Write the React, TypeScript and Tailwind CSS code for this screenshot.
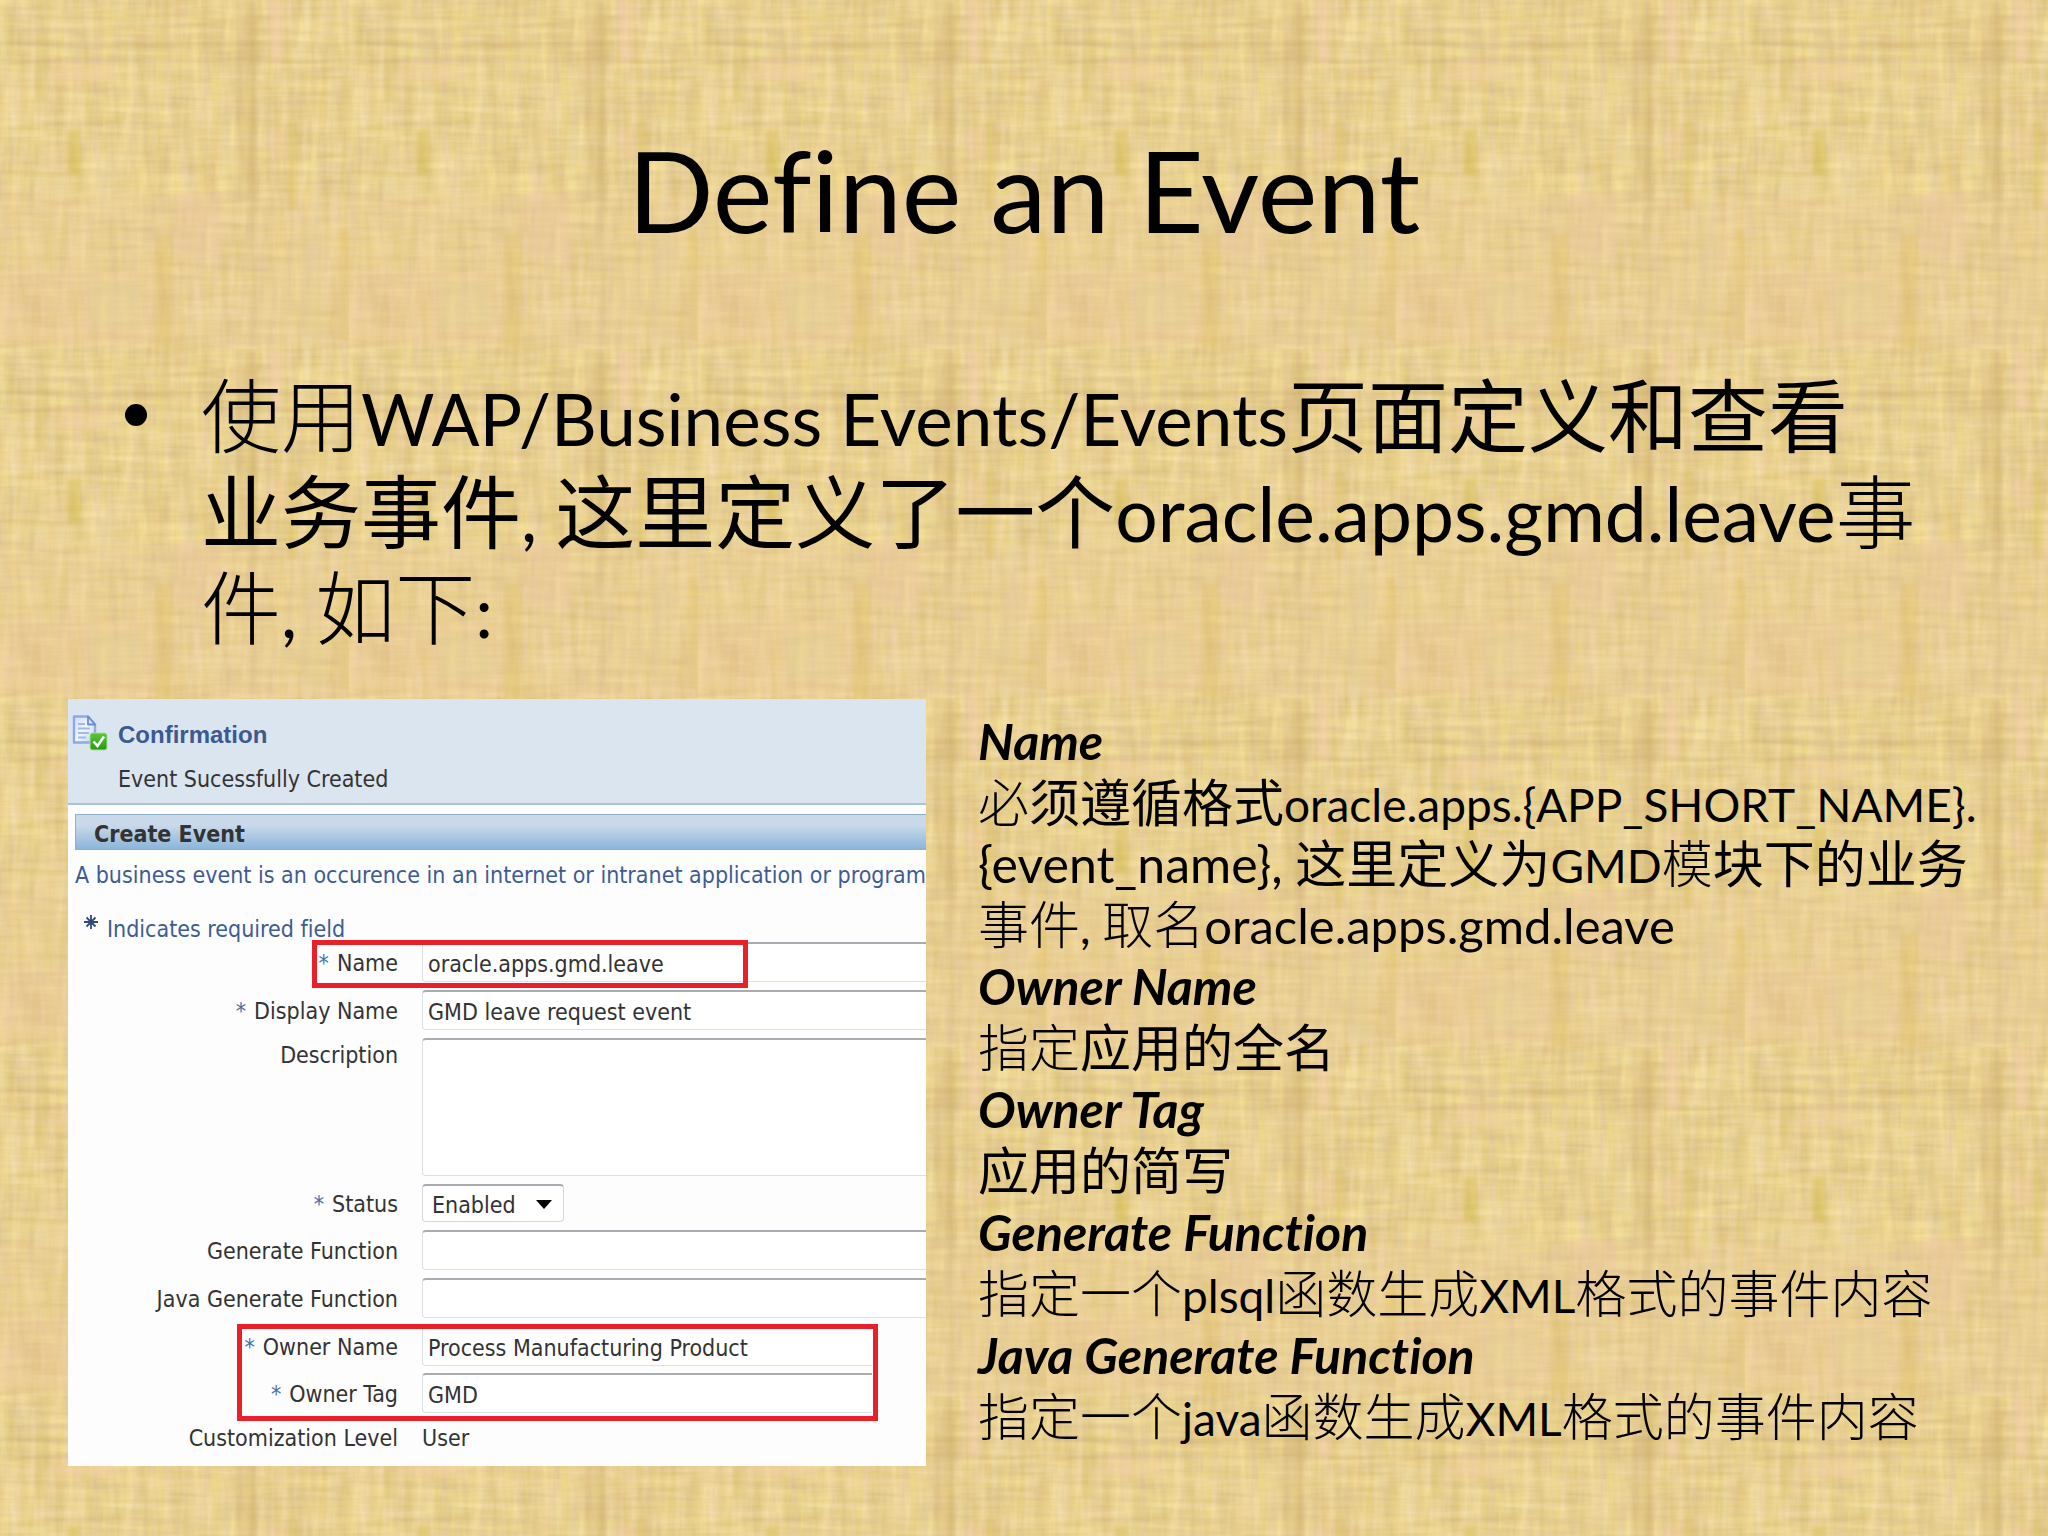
import type { ReactNode } from "react";

type NoteLine = { heading?: boolean; content: ReactNode };

// Light strokes for the Song-style glyphs, regular for the YaHei-style ones.
function Thin({ children }: { children: ReactNode }) {
  return <span className="font-light">{children}</span>;
}

function Big({ children }: { children: ReactNode }) {
  return <span className="text-[80px]">{children}</span>;
}

function Cjk({ children }: { children: ReactNode }) {
  return <span className="text-[51px]">{children}</span>;
}

const notes: NoteLine[] = [
  { heading: true, content: "Name" },
  {
    content: (
      <>
        <Cjk>
          <Thin>必</Thin>须遵循格式
        </Cjk>
        oracle.apps.{"{APP_SHORT_NAME}."}
      </>
    ),
  },
  {
    content: (
      <>
        <span className="text-[50px]">{"{event_name}, "}</span>
        <Cjk>这里定义为</Cjk>GMD
        <Cjk>
          <Thin>模</Thin>块下的业务
        </Cjk>
      </>
    ),
  },
  {
    content: (
      <>
        <Cjk>
          <Thin>事件</Thin>
        </Cjk>
        ,{" "}
        <Cjk>
          <Thin>取名</Thin>
        </Cjk>
        <span className="text-[49px]">oracle.apps.gmd.leave</span>
      </>
    ),
  },
  { heading: true, content: "Owner Name" },
  {
    content: (
      <Cjk>
        <Thin>指定</Thin>应用的全名
      </Cjk>
    ),
  },
  { heading: true, content: "Owner Tag" },
  { content: <Cjk>应用的简写</Cjk> },
  { heading: true, content: "Generate Function" },
  {
    content: (
      <>
        <Cjk>
          <Thin>指定一个</Thin>
        </Cjk>
        plsql
        <Cjk>
          <Thin>函数生成</Thin>
        </Cjk>
        XML
        <Cjk>
          <Thin>格式的事件内容</Thin>
        </Cjk>
      </>
    ),
  },
  { heading: true, content: "Java Generate Function" },
  {
    content: (
      <>
        <Cjk>
          <Thin>指定一个</Thin>
        </Cjk>
        java
        <Cjk>
          <Thin>函数生成</Thin>
        </Cjk>
        XML
        <Cjk>
          <Thin>格式的事件内容</Thin>
        </Cjk>
      </>
    ),
  },
];

// x, y, width, height, colour, opacity of the dyed fibres in one papyrus tile
const fibres: [number, number, number, number, string, number][] = [
  [0, 195, 349, 154, "#ecc79a", 0.25],
  [35, 0, 13, 100, "#cfb45e", 0.25],
  [67, 130, 12, 44, "#cdb83e", 0.35],
  [155, 235, 17, 114, "#d9bd55", 0.3],
  [155, 0, 17, 60, "#d9bd6a", 0.25],
  [235, 0, 22, 200, "#c9a566", 0.22],
  [250, 0, 6, 349, "#c0a060", 0.2],
  [270, 0, 12, 62, "#f3c9ac", 0.5],
  [272, 130, 14, 30, "#f0c5a0", 0.4],
  [288, 120, 9, 90, "#cfb648", 0.3],
  [340, 230, 9, 110, "#d8bb50", 0.3],
  [175, 190, 45, 70, "#f1c8a6", 0.28],
  [52, 60, 60, 22, "#f3cda6", 0.28],
  [0, 270, 150, 70, "#efc9a0", 0.15],
  [90, 280, 50, 50, "#dcd095", 0.25],
  [300, 215, 22, 130, "#e0cf98", 0.3],
  [127, 55, 3, 120, "#f8e6a4", 0.5],
  [145, 80, 2, 90, "#a98a4c", 0.3],
  [80, 196, 3, 65, "#f8e6a4", 0.4],
  [312, 150, 3, 75, "#f8e8b0", 0.5],
  [0, 43, 349, 2, "#a9854a", 0.3],
  [0, 59, 349, 2, "#b08d50", 0.25],
  [0, 22, 150, 3, "#f9e4a8", 0.4],
  [120, 83, 180, 3, "#f9e4a8", 0.4],
  [0, 178, 200, 3, "#f9e4a8", 0.4],
  [40, 193, 110, 2, "#fbeab4", 0.4],
  [180, 310, 60, 4, "#fae4ae", 0.4],
  [120, 228, 60, 2, "#b08c50", 0.25],
  [230, 345, 119, 2, "#f9e6ac", 0.4],
];

function Papyrus() {
  return (
    <svg className="absolute inset-0 h-full w-full" aria-hidden="true">
      <defs>
        <filter id="weft" x="0" y="0" width="100%" height="100%" colorInterpolationFilters="sRGB">
          <feTurbulence type="fractalNoise" baseFrequency="0.015 0.14" numOctaves="3" seed="4" stitchTiles="stitch" />
          <feColorMatrix values="0.18 0 0 0 0.82  0.22 0 0 0 0.705  0.2 0.16 0 0 0.39  0 0 0 0 1" />
        </filter>
        <filter id="warp" x="0" y="0" width="100%" height="100%" colorInterpolationFilters="sRGB">
          <feTurbulence type="fractalNoise" baseFrequency="0.11 0.014" numOctaves="3" seed="11" stitchTiles="stitch" />
          <feColorMatrix values="0.2 0 0 0 0.81  0.22 0.06 0 0 0.675  0.2 0 0.3 0 0.32  0 0 0 0 0.5" />
        </filter>
        <filter id="soft">
          <feGaussianBlur stdDeviation="2" />
        </filter>
        <pattern id="papyrus" width="349" height="349" patternUnits="userSpaceOnUse">
          <rect width="349" height="349" fill="#e9d092" />
          <rect width="349" height="349" filter="url(#weft)" />
          <rect width="349" height="349" filter="url(#warp)" />
          <g filter="url(#soft)">
            {fibres.map(([x, y, w, h, fill, opacity], i) => (
              <rect key={i} x={x} y={y} width={w} height={h} fill={fill} opacity={opacity} />
            ))}
          </g>
        </pattern>
      </defs>
      <rect width="100%" height="100%" fill="url(#papyrus)" />
    </svg>
  );
}

function ConfirmationIcon() {
  return (
    <svg className="h-9 w-9 shrink-0" viewBox="0 0 36 36" aria-hidden="true">
      <defs>
        <linearGradient id="page" x1="0" y1="0" x2="1" y2="1">
          <stop offset="0" stopColor="#c9dbfa" />
          <stop offset="0.5" stopColor="#f2f7ff" />
          <stop offset="1" stopColor="#bcd0f6" />
        </linearGradient>
        <linearGradient id="tick" x1="0" y1="0" x2="0" y2="1">
          <stop offset="0" stopColor="#5cc63a" />
          <stop offset="1" stopColor="#259a10" />
        </linearGradient>
      </defs>
      <path d="M2 1.500h14l7 8v18H2z" fill="url(#page)" stroke="#8ea9e4" strokeWidth="2.4" strokeLinejoin="round" />
      <path d="M16 1.500v8h7z" fill="#dfe9ff" stroke="#6d8ad6" strokeWidth="1.8" strokeLinejoin="round" />
      <path d="M6 9h7M6 13.500h12M6 18h11M6 22.500h8" stroke="#a3b9ea" strokeWidth="1.8" />
      <rect x="18" y="18" width="17" height="17" rx="2.5" fill="url(#tick)" stroke="#a9df96" />
      <path d="M21.500 26.500l4 4.500 6.500-9.500" fill="none" stroke="#fff" strokeWidth="2.6" />
    </svg>
  );
}

function RequiredIcon() {
  return (
    <svg className="h-4 w-4 shrink-0" viewBox="0 0 16 16" aria-hidden="true">
      <path d="M8 1v14M1 8h14M3.500 3.500l9 9M12.500 3.500l-9 9" stroke="#2f4a7c" strokeWidth="1.8" />
    </svg>
  );
}

type RowProps = { id?: string; label: string; required?: boolean; top?: boolean; children: ReactNode };

function Row({ id, label, required, top, children }: RowProps) {
  return (
    <div className={top ? "flex items-start gap-6" : "flex items-center gap-6"}>
      <label htmlFor={id} className="w-[330px] shrink-0 pt-[2px] text-right">
        {required && <span className="mr-2 text-[#4a6ea5]">*</span>}
        {label}
      </label>
      {children}
    </div>
  );
}

const fieldClass =
  "h-10 min-w-0 flex-1 rounded-l-sm border border-r-0 border-t-2 border-[#dcdfe6] border-t-[#a9abb0] bg-white px-[5px] pt-[2px] outline-none";

function EventForm() {
  return (
    <section className="min-w-0 flex-[858] overflow-hidden bg-[#fdfdfe] pb-[13px] font-['DejaVu_Sans_Condensed','DejaVu_Sans',sans-serif] text-[23px] leading-[30px] text-[#333]">
      <header className="flex h-[106px] gap-[10px] border-b-2 border-[#a9c3de] bg-[#dbe5ef] pt-4 pl-1">
        <ConfirmationIcon />
        <div>
          <h2 className="mt-[5px] font-['Liberation_Sans',Arial,sans-serif] text-[24px] font-bold text-[#3c5a8f]">
            Confirmation
          </h2>
          <p className="mt-[14px]">Event Sucessfully Created</p>
        </div>
      </header>

      <h3 className="mt-[9px] ml-[7px] h-9 border border-r-0 border-[#8fb0cf] bg-gradient-to-b from-[#c9d9e9] from-30% to-[#8cb5db] pl-[18px] leading-[38px] font-bold">
        Create Event
      </h3>
      <p className="mt-[10px] ml-[7px] whitespace-nowrap text-[#3d5c92]">
        A business event is an occurence in an internet or intranet application or program
      </p>
      <p className="mt-6 ml-[15px] flex gap-2 text-[#3d5c92]">
        <RequiredIcon />
        Indicates required field
      </p>

      <form className="-mt-[2px] flex flex-col gap-2" onSubmit={(e) => e.preventDefault()}>
        <div className="relative">
          <Row id="name" label="Name" required>
            <input id="name" className={fieldClass} defaultValue="oracle.apps.gmd.leave" />
          </Row>
          <div className="pointer-events-none absolute -top-[2px] left-[244px] h-12 w-[436px] border-[5px] border-[#e8202a]" />
        </div>
        <Row id="displayName" label="Display Name" required>
          <input id="displayName" className={fieldClass} defaultValue="GMD leave request event" />
        </Row>
        <Row id="description" label="Description" top>
          <textarea
            id="description"
            className="h-[138px] min-w-0 flex-1 resize-none rounded-l-sm border border-t-2 border-r-0 border-[#dcdfe6] border-t-[#a9abb0] bg-white outline-none"
          />
        </Row>
        <Row id="status" label="Status" required>
          <div className="relative">
            <select
              id="status"
              className="block h-[38px] w-[142px] appearance-none rounded-sm border border-t-2 border-[#d3d7de] border-t-[#a9abb0] bg-white pt-[2px] pl-[9px]"
            >
              <option>Enabled</option>
            </select>
            <svg className="pointer-events-none absolute top-4 right-3 h-[9px] w-4" viewBox="0 0 16 9" aria-hidden="true">
              <path d="M0 0h16L8 9z" fill="#000" />
            </svg>
          </div>
        </Row>
        <Row id="generateFunction" label="Generate Function">
          <input id="generateFunction" className={fieldClass} />
        </Row>
        <Row id="javaGenerateFunction" label="Java Generate Function">
          <input id="javaGenerateFunction" className={fieldClass} />
        </Row>
        <div className="relative flex flex-col gap-[7px] pr-[54px]">
          <Row id="ownerName" label="Owner Name" required>
            <input id="ownerName" className={fieldClass} defaultValue="Process Manufacturing Product" />
          </Row>
          <Row id="ownerTag" label="Owner Tag" required>
            <input id="ownerTag" className={fieldClass} defaultValue="GMD" />
          </Row>
          <div className="pointer-events-none absolute -top-[2px] left-[169px] h-[97px] w-[641px] border-[5px] border-[#e8202a]" />
        </div>
        <Row id="customizationLevel" label="Customization Level">
          <output id="customizationLevel" className="pt-[2px]">User</output>
        </Row>
      </form>
    </section>
  );
}

export default function App() {
  return (
    <main className="relative min-h-screen overflow-hidden bg-[#e9d092] font-['Lato','Noto_Sans_CJK_SC',sans-serif] text-black [font-variant-ligatures:none]">
      <Papyrus />
      <div className="relative">
        <h1 className="pt-[119px] text-center text-[113px] leading-[140px]">Define an Event</h1>

        <ul className="mt-[108px] pl-[125px]">
          <li className="flex gap-[54px] text-[71px] leading-[96px] whitespace-nowrap">
            <span className="mt-[37px] h-[22px] w-[22px] shrink-0 rounded-full bg-black" />
            <div>
              <p className="h-24">
                <Big>
                  <Thin>使用</Thin>
                </Big>
                WAP/Business Events/Events
                <Big>页面定义和查看</Big>
              </p>
              <p className="h-24">
                <Big>业务事件</Big>, <Big>这里定义了一个</Big>
                <span className="text-[75px]">oracle.apps.gmd.leave</span>
                <Big>
                  <Thin>事</Thin>
                </Big>
              </p>
              <p className="h-24">
                <Big>
                  <Thin>件</Thin>
                </Big>
                ,{" "}
                <Big>
                  <Thin>如下</Thin>
                </Big>
                :
              </p>
            </div>
          </li>
        </ul>

        <div className="mt-11 flex items-start gap-[52px] pr-[60px] pb-[70px] pl-[68px]">
          <EventForm />
          <div className="min-w-0 flex-[1010] pt-[11px] text-[46px] whitespace-nowrap">
            {notes.map((line, i) =>
              line.heading ? (
                <h4 key={i} className="h-[62px] text-[50px] leading-[62px] font-bold italic">
                  {line.content}
                </h4>
              ) : (
                <p key={i} className="h-[61px] leading-[61px]">
                  {line.content}
                </p>
              )
            )}
          </div>
        </div>
      </div>
    </main>
  );
}
